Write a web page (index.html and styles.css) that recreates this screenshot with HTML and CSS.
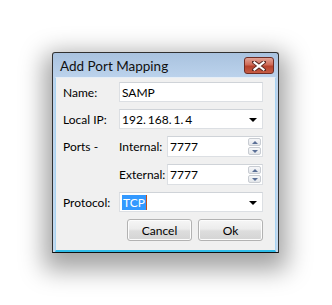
FILE: index.html
```html
<!DOCTYPE html>
<html>
<head>
<meta charset="utf-8">
<link rel="stylesheet" href="styles.css">
</head>
<body>
<div class="window">
  <div class="titlebar">
    <span class="title">Add Port Mapping</span>
    <div class="close">
      <svg width="14" height="10" viewBox="0 0 14 10">
        <path d="M2 1 L12 9 M12 1 L2 9" stroke="#5a2a24" stroke-width="4" stroke-linecap="square"/>
        <path d="M2.5 1.5 L11.5 8.5 M11.5 1.5 L2.5 8.5" stroke="#ffffff" stroke-width="2.2" stroke-linecap="square"/>
      </svg>
    </div>
  </div>
  <div class="client">
    <div class="row">
      <span class="label">Name:</span>
      <div class="field text"><span>SAMP</span></div>
    </div>
    <div class="row">
      <span class="label">Local IP:</span>
      <div class="field combo"><span class="ip">192<span class="dot">.</span>168<span class="dot">.</span>1<span class="dot">.</span>4</span><span class="arrow"></span></div>
    </div>
    <div class="row port">
      <span class="label">Ports -</span>
      <span class="sublabel">Internal:</span>
      <div class="field spin"><span>7777</span>
        <div class="spinbtns"><div class="sb up"></div><div class="sb down"></div></div>
      </div>
    </div>
    <div class="row port">
      <span class="label"></span>
      <span class="sublabel">External:</span>
      <div class="field spin"><span>7777</span>
        <div class="spinbtns"><div class="sb up"></div><div class="sb down"></div></div>
      </div>
    </div>
    <div class="row">
      <span class="label">Protocol:</span>
      <div class="field combo"><span class="sel">TCP</span><span class="caret"></span><span class="arrow"></span></div>
    </div>
    <div class="buttons">
      <div class="btn">Cancel</div>
      <div class="btn">Ok</div>
    </div>
  </div>
</div>
</body>
</html>
```

FILE: styles.css
```css
html, body {
  margin: 0;
  padding: 0;
  background: #ffffff;
}
body {
  width: 332px;
  height: 305px;
  overflow: hidden;
  font-family: Lato, "Noto Sans", sans-serif;
  font-size: 12px;
  color: #000;
}
.window {
  margin: 52px 0 0 52px;
  width: 221px;
  height: 199px;
  border: 1px solid #303030;
  border-bottom-color: #101010;
  border-radius: 3px 3px 0 0;
  background: linear-gradient(#a9c2df, #bcd3ec 25px, #c3daf0);
  padding: 0 2px 0 2px;
  box-shadow: 0 9px 24px 8px rgba(0,0,0,0.36);
  display: flex;
  flex-direction: column;
  box-sizing: content-box;
}
.titlebar {
  height: 24px;
  display: flex;
  align-items: center;
  justify-content: space-between;
  padding: 0 2px 0 5px;
  flex: none;
}
.title {
  font-size: 13.5px;
  color: #111;
  padding-top: 1px;
}
.close {
  width: 28px;
  height: 15px;
  border: 1px solid #6e2c24;
  border-radius: 3px;
  background: linear-gradient(#e2a497, #cf6a57 45%, #b5412c 55%, #c55c44);
  display: flex;
  align-items: center;
  justify-content: center;
  margin-top: 1px;
}
.close svg { display: block; }
.client {
  flex: 1;
  background: #f0f0f0;
  border: 1px solid #e6eef7;
  border-bottom: 2px solid #2fbde9;
  border-left-color: #a9d4f2;
  border-right-color: #a9d4f2;
  padding: 4px 12px 0 7px;
  display: flex;
  flex-direction: column;
  gap: 7px;
}
.row {
  display: flex;
  align-items: center;
  height: 20px;
}
.row.port { height: 21px; }
.label {
  width: 56px;
  flex: none;
}
.sublabel {
  width: 48px;
  flex: none;
}
.field {
  flex: 1;
  height: 100%;
  box-sizing: border-box;
  background: #fff;
  border: 1px solid #dcdfe3;
  border-top-color: #cfd3d8;
  display: flex;
  align-items: center;
  padding-left: 2px;
  position: relative;
}
.dot { margin: 0 2px 0 0; }
.combo .arrow {
  position: absolute;
  right: 5px;
  top: 8px;
  width: 0;
  height: 0;
  border-left: 4px solid transparent;
  border-right: 4px solid transparent;
  border-top: 4px solid #000;
}
.sel {
  background: #3399ff;
  color: #fff;
  padding: 0 1px;
}
.caret {
  width: 1px;
  height: 15px;
  background: #c4501a;
}
.spinbtns {
  position: absolute;
  right: 1px;
  top: 1px;
  width: 13px;
  height: 17px;
  display: flex;
  flex-direction: column;
  gap: 1px;
}
.sb {
  flex: 1;
  border: 1px solid #c8ccd2;
  border-radius: 2px;
  background: linear-gradient(#f6f7f9, #e3e6ea);
  position: relative;
}
.sb::after {
  content: "";
  position: absolute;
  left: 3px;
  width: 0;
  height: 0;
  border-left: 3px solid transparent;
  border-right: 3px solid transparent;
}
.sb.up::after { top: 2px; border-bottom: 3px solid #5a6f96; }
.sb.down::after { top: 2px; border-top: 3px solid #5a6f96; }
.buttons {
  display: flex;
  justify-content: flex-end;
  gap: 6px;
  height: 22px;
}
.btn {
  width: 65px;
  box-sizing: border-box;
  border: 1px solid #b2b2b2;
  border-radius: 3px;
  background: linear-gradient(#f6f6f6, #ececec 45%, #dddddd 55%, #d4d4d4);
  display: flex;
  align-items: center;
  justify-content: center;
  box-shadow: inset 0 0 0 1px #fcfcfc;
}
```
